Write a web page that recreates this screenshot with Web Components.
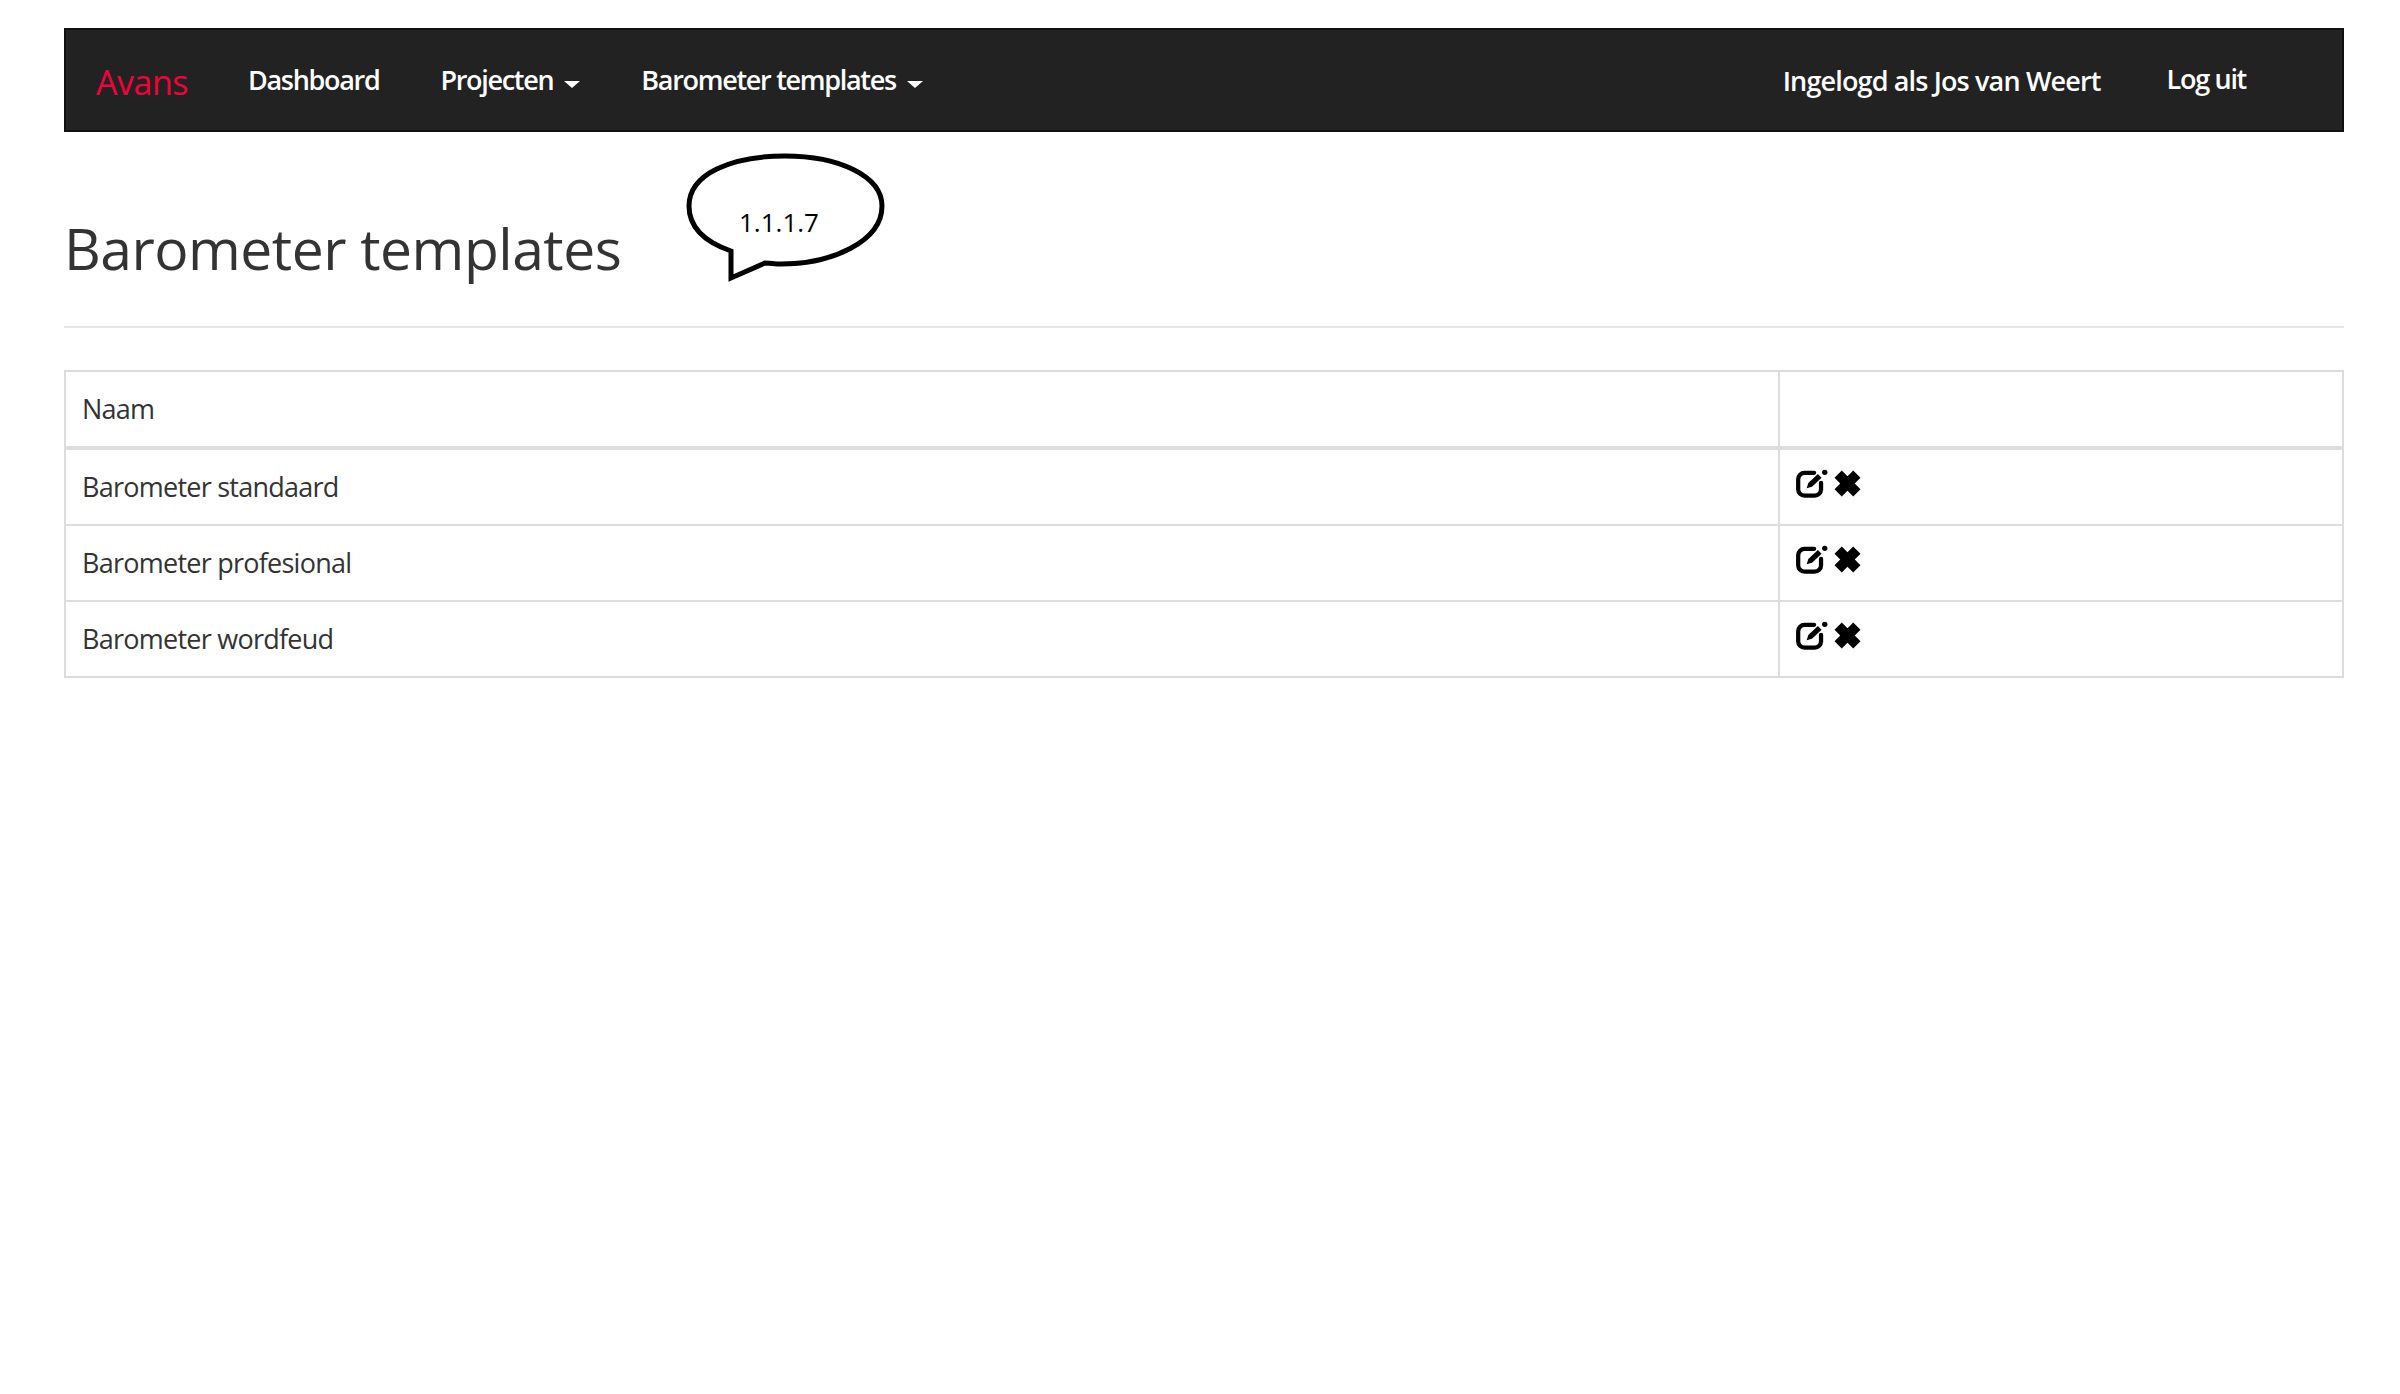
<!DOCTYPE html>
<html lang="nl">
<head>
<meta charset="utf-8">
<title>Barometer templates</title>
<style>
  html,body{margin:0;background:#fff}
  body{padding:28px 56px 0 64px;font-family:"Open Sans","Noto Sans",sans-serif;color:#333}
</style>
</head>
<body>
<app-navbar>
  <nav-link slot="left" brand>Avans</nav-link>
  <nav-link slot="left">Dashboard</nav-link>
  <nav-link slot="left" caret>Projecten</nav-link>
  <nav-link slot="left" caret>Barometer templates</nav-link>
  <nav-link slot="right" wide>Ingelogd als Jos van Weert</nav-link>
  <nav-link slot="right">Log uit</nav-link>
</app-navbar>
<page-header version="1.1.1.7">Barometer templates</page-header>
<template-table>
  <template-row>Barometer standaard</template-row>
  <template-row>Barometer profesional</template-row>
  <template-row>Barometer wordfeud</template-row>
</template-table>

<script>
class AppNavbar extends HTMLElement{
    constructor(){
        super();
        this.attachShadow({mode:'open'});
        this.shadowRoot.innerHTML = `
            <style>
                :host{display:flex;justify-content:space-between;align-items:center;box-sizing:border-box;height:104px;background:#222;border:2px solid #111;padding:0 96px 0 30px}
                div{display:flex;align-items:center}
                .left{gap:61px}
                .right{gap:66px;align-items:flex-start}
            </style>
            <div class="left"><slot name="left"></slot></div>
            <div class="right"><slot name="right"></slot></div>
        `
    }
}
customElements.define("app-navbar",AppNavbar);

class NavLink extends HTMLElement{
    constructor(){
        super();
        this.attachShadow({mode:'open'});
        this.shadowRoot.innerHTML = `
            <style>
                :host{display:flex;align-items:center;gap:11px;color:#fff;font-size:27px;font-weight:600;line-height:40px;letter-spacing:-1.3px;white-space:nowrap}
                :host([brand]){color:#f0033c;font-size:34px;font-weight:400;letter-spacing:-0.5px;padding-top:4px;margin-right:-1px}
                :host([wide]){letter-spacing:-0.85px;padding-top:2px}
                i{display:none;width:0;height:0;margin-top:9px;border-top:7px solid #fff;border-left:8px solid transparent;border-right:8px solid transparent}
                :host([caret]) i{display:block}
            </style>
            <slot></slot><i></i>
        `
    }
}
customElements.define("nav-link",NavLink);

class PageHeader extends HTMLElement{
    constructor(){
        super();
        this.attachShadow({mode:'open'});
        this.shadowRoot.innerHTML = `
            <style>
                :host{display:block;position:relative;height:112px;padding-top:82px;margin-bottom:42px;border-bottom:2px solid #e6e6e6}
                h1{margin:0;font-size:57px;line-height:68px;font-weight:400;color:#333;letter-spacing:-0.5px}
                svg{position:absolute;left:621px;top:14px}
                span{position:absolute;left:675px;top:75px;font:26px/30px "Open Sans",sans-serif;color:#000}
            </style>
            <h1><slot></slot></h1>
            <svg width="206" height="136" viewBox="0 0 206 136">
                <path d="M46 105C20 96 4 82 4 60C4 28 46 10 100 10C154 10 197 30 197 60C197 96 146 118 96 118C90 118 85 117 80 117L46 132Z" fill="#fff" stroke="#000" stroke-width="5"/>
            </svg>
            <span id="version"></span>
        `
        this.shadowRoot.querySelector("#version").innerText = this.getAttribute("version");
    }
}
customElements.define("page-header",PageHeader);

class TemplateTable extends HTMLElement{
    constructor(){
        super();
        this.attachShadow({mode:'open'});
        this.shadowRoot.innerHTML = `
            <style>
                :host{display:block;border:2px solid #ddd;font-size:27px;color:#333}
                .head{display:grid;grid-template-columns:1712px 1fr;height:74px;border-bottom:4px solid #ddd}
                .head div{display:flex;align-items:center;padding:0 0 2px 16px;letter-spacing:-0.8px}
                .head div+div{border-left:2px solid #ddd}
            </style>
            <div class="head"><div>Naam</div><div></div></div>
            <slot></slot>
        `
    }
}
customElements.define("template-table",TemplateTable);

class TemplateRow extends HTMLElement{
    constructor(){
        super();
        this.attachShadow({mode:'open'});
        this.shadowRoot.innerHTML = `
            <style>
                :host{display:grid;grid-template-columns:1712px 1fr;height:76px;box-sizing:border-box;border-bottom:2px solid #ddd;font-size:27px;letter-spacing:-0.75px}
                :host(:last-child){border-bottom:0;height:74px}
                div{display:flex;align-items:center;padding:0 0 1px 16px}
                .acties{border-left:2px solid #ddd;gap:5px;padding:0 0 7px 15px}
            </style>
            <div><slot></slot></div>
            <div class="acties">
                <svg width="34" height="30" viewBox="0 0 32 28">
                    <path d="M18 3.500H9a6 6 0 0 0-6 6V19a6 6 0 0 0 6 6h9.500a6 6 0 0 0 6-6v-6" fill="none" stroke="#000" stroke-width="4" stroke-linecap="round"/>
                    <path d="M11 18l1.500-5 9-8.500 3.500 3.500-9 8.500z" fill="#000"/>
                    <circle cx="28" cy="3" r="2.500" fill="#000"/>
                </svg>
                <svg width="27" height="27" viewBox="0 0 26 26">
                    <path d="M7.500.5l5.500 5.500 5.500-5.500 7 7-5.500 5.500 5.500 5.500-7 7-5.500-5.500-5.500 5.500-7-7 5.500-5.500-5.500-5.500z" fill="#000"/>
                </svg>
            </div>
        `
    }
}
customElements.define("template-row",TemplateRow);
</script>
</body>
</html>
